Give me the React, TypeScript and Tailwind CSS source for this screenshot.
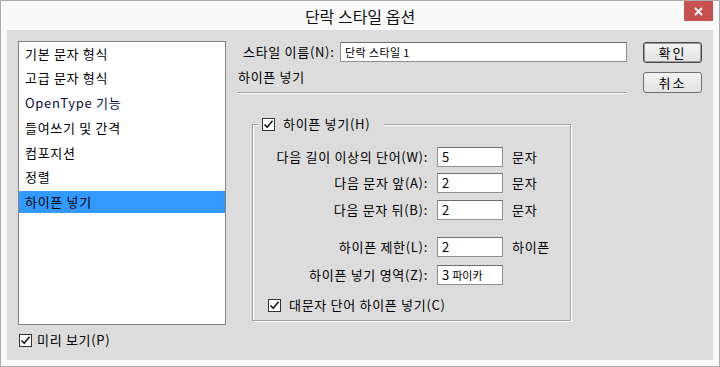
import React from "react";

const FONT = { fontFamily: '"Noto Sans CJK KR", "Noto Sans", sans-serif' };

const categories = [
  "기본 문자 형식",
  "고급 문자 형식",
  "OpenType 기능",
  "들여쓰기 및 간격",
  "컴포지션",
  "정렬",
  "하이픈 넣기",
];

function CheckBox() {
  return (
    <span className="flex h-[13px] w-[13px] shrink-0 items-center justify-center border border-[#333333] bg-white">
      <svg width="11" height="11" viewBox="0 0 11 11">
        <path d="M1.5 5.5 L4.2 8.3 L9.5 1.8" fill="none" stroke="#1a1a1a" strokeWidth="1.6" />
      </svg>
    </span>
  );
}

function Field({ value }: { value: React.ReactNode }) {
  return (
    <div className="flex h-[20px] w-[66px] items-center border border-[#8f8f8f] border-t-[#6d6d6d] bg-white pl-[4px] text-[13px] tracking-normal text-black">
      {value}
    </div>
  );
}

function Row({
  label,
  value,
  unit,
  className,
}: {
  label: string;
  value: React.ReactNode;
  unit?: string;
  className?: string;
}) {
  return (
    <div className={`flex h-[20px] items-center ${className ?? ""}`}>
      <div className="w-[175px] text-right text-[13px] leading-[20px]">{label}</div>
      <div className="ml-[9px]">
        <Field value={value} />
      </div>
      {unit && <div className="ml-[9px] text-[13px] leading-[20px]">{unit}</div>}
    </div>
  );
}

function DlgButton({ label, primary }: { label: string; primary?: boolean }) {
  return (
    <button
      type="button"
      className={`flex h-[21px] w-[59px] items-center justify-center rounded-[3px] border bg-gradient-to-b from-[#f4f4f4] to-[#e2e2e2] text-[13px] leading-none text-black ${
        primary
          ? "border-[#4a4a4a] shadow-[inset_0_0_0_1px_#9a9a9a]"
          : "border-[#707070]"
      }`}
    >
      {label}
    </button>
  );
}

export default function App() {
  return (
    <div
      style={FONT}
      className="flex h-[367px] w-[720px] flex-col border border-[#acacac] bg-[#f9f9f9] text-black"
    >
      <div className="relative flex h-[29px] shrink-0 items-center justify-center">
        <span className="text-[16px] leading-none text-[#111111]">단락 스타일 옵션</span>
        <div className="absolute right-[6px] top-0 flex h-[20px] w-[29px] items-center justify-center bg-[#c75050]">
          <svg width="9" height="9" viewBox="0 0 9 9">
            <path d="M1 1 L8 8 M8 1 L1 8" stroke="#ffffff" strokeWidth="1.8" />
          </svg>
        </div>
      </div>

      <div className="mx-[6px] flex h-[330px] shrink-0 bg-[#dcdcdc] pl-[11px] pt-[11px] tracking-[0.7px]">
        {/* left column */}
        <div className="flex w-[208px] flex-col">
          <div className="flex h-[284px] flex-col gap-[2.8px] border border-[#828282] bg-white">
            {categories.map((c, i) => (
              <div
                key={c}
                className={`flex h-[22px] items-center pl-[6px] text-[13px] leading-none ${
                  i === categories.length - 1 ? "bg-[#3399ff]" : ""
                } ${c.startsWith("OpenType") ? "text-[#0a0a3a]" : ""}`}
              >
                {c}
              </div>
            ))}
          </div>
          <div className="ml-[1px] mt-[7px] flex h-[16px] items-center gap-[5px] text-[13px]">
            <CheckBox />
            <span>미리 보기(P)</span>
          </div>
        </div>

        {/* right main column */}
        <div className="ml-[11px] flex w-[390px] flex-col">
          <div className="mt-[1px] flex h-[20px] items-center">
            <div className="w-[103px] whitespace-nowrap pl-[6px] text-[13px] leading-[20px]">스타일 이름(N):</div>
            <div className="flex h-[20px] w-[287px] items-center border border-[#8f8f8f] border-t-[#6d6d6d] bg-white pl-[4px] text-[11px] tracking-[0.4px]">
              단락 스타일 1
            </div>
          </div>
          <div className="mt-[5px] h-[20px] pl-[1px] text-[13px] leading-[20px]">하이픈 넣기</div>
          <div className="mt-[5px] border-t border-[#a0a0a0] shadow-[0_1px_0_#ffffff]" />

          <div className="relative ml-[15px] mt-[31px] h-[197px] w-[319px] border border-[#a0a0a0] shadow-[inset_1px_1px_0_#ffffff,1px_1px_0_#ffffff]">
            <div className="absolute left-[5px] top-[-9px] flex h-[16px] items-center gap-[8px] bg-[#dcdcdc] pl-[4px] pr-[14px] text-[13px]">
              <CheckBox />
              <span>하이픈 넣기(H)</span>
            </div>

            <div className="flex flex-col pt-[22px]">
              <Row label="다음 길이 이상의 단어(W):" value="5" unit="문자" />
              <Row label="다음 문자 앞(A):" value="2" unit="문자" className="mt-[6px]" />
              <Row label="다음 문자 뒤(B):" value="2" unit="문자" className="mt-[7px]" />
              <Row label="하이픈 제한(L):" value="2" unit="하이픈" className="mt-[17px]" />
              <Row
                label="하이픈 넣기 영역(Z):"
                value={
                  <span>
                    3 <span className="text-[11px]">파이카</span>
                  </span>
                }
                className="mt-[8px]"
              />
              <div className="mt-[12px] flex h-[16px] items-center gap-[8px] pl-[15px] text-[13px]">
                <CheckBox />
                <span>대문자 단어 하이픈 넣기(C)</span>
              </div>
            </div>
          </div>
        </div>

        {/* buttons */}
        <div className="ml-[16px] mt-[1px] flex w-[59px] flex-col gap-[9px] tracking-[2px]">
          <DlgButton label="확인" primary />
          <DlgButton label="취소" />
        </div>
      </div>
    </div>
  );
}
